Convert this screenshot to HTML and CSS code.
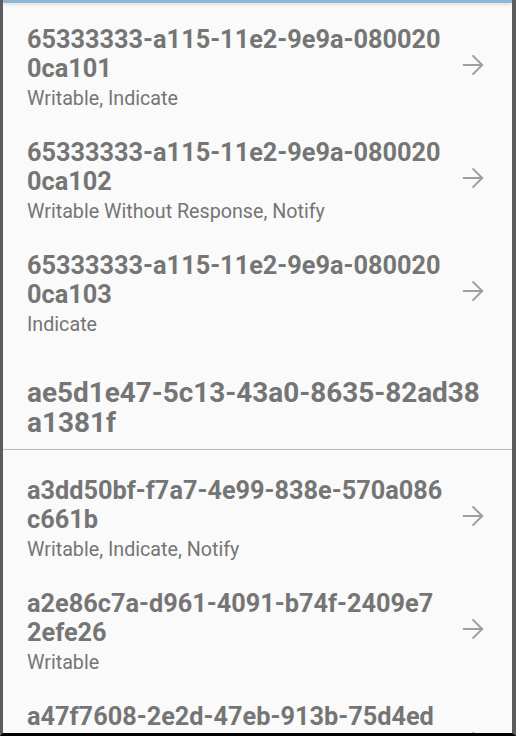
FILE: index.html
```html
<!DOCTYPE html>
<html>
<head>
<meta charset="utf-8">
<link rel="stylesheet" href="styles.css">
</head>
<body>
<div class="frame">
  <div class="topbar"></div>
  <div class="list">
    <section class="section">
      <div class="row">
        <div class="text">
          <div class="title">65333333-a115-11e2-9e9a-0800200ca101</div>
          <div class="sub">Writable, Indicate</div>
        </div>
        <svg class="arrow" viewBox="0 0 24 24"><path d="M1 12H22M11.5 1.5L22 12L11.5 22.5"/></svg>
      </div>
      <div class="row">
        <div class="text">
          <div class="title">65333333-a115-11e2-9e9a-0800200ca102</div>
          <div class="sub">Writable Without Response, Notify</div>
        </div>
        <svg class="arrow" viewBox="0 0 24 24"><path d="M1 12H22M11.5 1.5L22 12L11.5 22.5"/></svg>
      </div>
      <div class="row">
        <div class="text">
          <div class="title">65333333-a115-11e2-9e9a-0800200ca103</div>
          <div class="sub">Indicate</div>
        </div>
        <svg class="arrow" viewBox="0 0 24 24"><path d="M1 12H22M11.5 1.5L22 12L11.5 22.5"/></svg>
      </div>
      <div class="header">ae5d1e47-5c13-43a0-8635-82ad38a1381f</div>
    </section>
    <section class="section">
      <div class="row">
        <div class="text">
          <div class="title">a3dd50bf-f7a7-4e99-838e-570a086c661b</div>
          <div class="sub">Writable, Indicate, Notify</div>
        </div>
        <svg class="arrow" viewBox="0 0 24 24"><path d="M1 12H22M11.5 1.5L22 12L11.5 22.5"/></svg>
      </div>
      <div class="row">
        <div class="text">
          <div class="title">a2e86c7a-d961-4091-b74f-2409e72efe26</div>
          <div class="sub">Writable</div>
        </div>
        <svg class="arrow" viewBox="0 0 24 24"><path d="M1 12H22M11.5 1.5L22 12L11.5 22.5"/></svg>
      </div>
      <div class="row">
        <div class="text">
          <div class="title">a47f7608-2e2d-47eb-913b-75d4ed3c1234</div>
          <div class="sub">Writable, Notify</div>
        </div>
        <svg class="arrow" viewBox="0 0 24 24"><path d="M1 12H22M11.5 1.5L22 12L11.5 22.5"/></svg>
      </div>
    </section>
  </div>
</div>
</body>
</html>
```
FILE: styles.css
```css
html, body {
  margin: 0;
  padding: 0;
  background: #000;
}
.frame {
  box-sizing: border-box;
  width: 516px;
  height: 736px;
  display: flex;
  flex-direction: column;
  overflow: hidden;
  background: #fafafa;
  border-left: 3px solid #5c5c5c;
  border-right: 4px solid #5c5c5c;
  border-bottom: 3px solid #000;
  font-family: Roboto, "Liberation Sans", sans-serif;
  color: #757575;
}
.topbar {
  flex: none;
  height: 3px;
  background: #8fb7d3;
  box-shadow: 0 1px 4px rgba(0, 0, 0, 0.18);
  position: relative;
  z-index: 1;
}
.list {
  flex: 1;
  display: flex;
  flex-direction: column;
  min-height: 0;
}
.section {
  padding-top: 8px;
}
.section + .section {
  border-top: 1px solid #bdbdbd;
  padding-top: 12px;
}
.row {
  display: flex;
  align-items: center;
  padding: 14px 28px 14px 24px;
}
.text {
  flex: 1;
  min-width: 0;
  padding-right: 17px;
}
.title {
  font-size: 25.3px;
  font-weight: 700;
  line-height: 29px;
  word-break: break-all;
}
.sub {
  margin-top: 5px;
  font-size: 19.7px;
  line-height: 22px;
}
.arrow {
  flex: none;
  width: 22px;
  height: 22px;
  margin-top: -6px;
  fill: none;
  stroke: #9e9e9e;
  stroke-width: 2.2;
}
.header {
  padding: 28px 20px 11px 24px;
  font-size: 27.9px;
  font-weight: 700;
  line-height: 30px;
  word-break: break-all;
}
```
